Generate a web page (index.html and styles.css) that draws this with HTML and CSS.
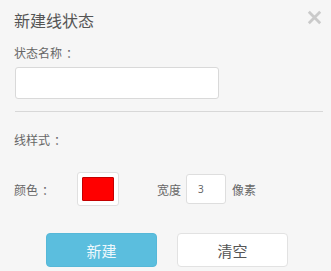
FILE: index.html
```html
<!DOCTYPE html>
<html lang="zh">
<head>
<meta charset="utf-8">
<title>新建线状态</title>
<link rel="stylesheet" href="styles.css">
</head>
<body>
<div class="dialog">
  <div class="header">
    <h1 class="title">新建线状态</h1>
    <button class="close" aria-label="关闭">
      <svg width="15" height="15" viewBox="0 0 15 15"><path d="M1.8 1.8 L13.2 13.2 M13.2 1.8 L1.8 13.2" stroke="#cacaca" stroke-width="2.8" stroke-linecap="butt" fill="none"/></svg>
    </button>
  </div>
  <div class="field-label">状态名称<span class="colon">：</span></div>
  <input class="name-input" type="text">
  <div class="divider"></div>
  <div class="field-label section-label">线样式<span class="colon">：</span></div>
  <div class="style-row">
    <span class="row-label">颜色<span class="colon">：</span></span>
    <span class="swatch"><span class="swatch-color"></span></span>
    <span class="width-label">宽度</span>
    <input class="width-input" type="text" value="3">
    <span class="unit">像素</span>
  </div>
  <div class="actions">
    <button class="btn btn-primary">新建</button>
    <button class="btn btn-default">清空</button>
  </div>
</div>
</body>
</html>
```
FILE: styles.css
```css
html, body {
  margin: 0;
  padding: 0;
  background: #f6f6f6;
}
body {
  font-family: "Noto Sans CJK SC", "Noto Sans", sans-serif;
  color: #555;
}
.dialog {
  width: 331px;
  height: 271px;
  box-sizing: border-box;
  padding: 10px 8px 0 14px;
}
.header {
  display: flex;
  justify-content: space-between;
  align-items: flex-start;
}
.title {
  margin: 0;
  font-size: 16px;
  font-weight: normal;
  line-height: 20px;
  color: #555;
}
.close {
  border: 0;
  background: none;
  padding: 0;
  margin: 0 1px 0 0;
  width: 15px;
  height: 15px;
  display: block;
}
.close svg { display: block; }
.colon {
  padding-left: 4px;
}
.field-label {
  font-size: 12px;
  line-height: 16px;
  margin-top: 15px;
  color: #666;
}
.name-input {
  display: block;
  box-sizing: border-box;
  width: 204px;
  height: 32px;
  margin: 6px 0 0 1px;
  border: 1px solid #d9d9d9;
  border-radius: 3px;
  background: #fff;
  padding: 0 8px;
  font-family: inherit;
}
.divider {
  height: 1px;
  background: #d8d8d8;
  margin: 12px 0 0 1px;
  width: 308px;
}
.section-label {
  margin-top: 20px;
}
.style-row {
  display: flex;
  align-items: center;
  margin-top: 24px;
  font-size: 12px;
  height: 34px;
  color: #666;
}
.row-label {
  width: 63px;
}
.swatch {
  box-sizing: border-box;
  width: 42px;
  height: 34px;
  border: 1px solid #e0e0e0;
  border-radius: 3px;
  background: #fff;
  padding: 4px;
  display: flex;
}
.swatch-color {
  flex: 1;
  background: #f00;
  border: 1px solid #c30000;
  border-radius: 1px;
}
.width-label {
  margin-left: 38px;
}
.width-input {
  box-sizing: border-box;
  width: 40px;
  height: 30px;
  margin-left: 5px;
  border: 1px solid #dedede;
  border-radius: 3px;
  background: #fff;
  padding: 0 0 0 11px;
  font-family: "Noto Sans", sans-serif;
  font-size: 10px;
  color: #666;
}
.unit {
  margin-left: 6px;
}
.actions {
  display: flex;
  gap: 20px;
  margin: 27px 0 0 32px;
}
.btn {
  box-sizing: border-box;
  width: 111px;
  height: 34px;
  border-radius: 4px;
  font-family: inherit;
  font-size: 15px;
  padding: 0;
}
.btn-primary {
  background: #5bbede;
  border: 1px solid #56b8d8;
  color: #eef8fc;
}
.btn-default {
  background: #fff;
  border: 1px solid #e2e2e2;
  color: #555;
}
```
